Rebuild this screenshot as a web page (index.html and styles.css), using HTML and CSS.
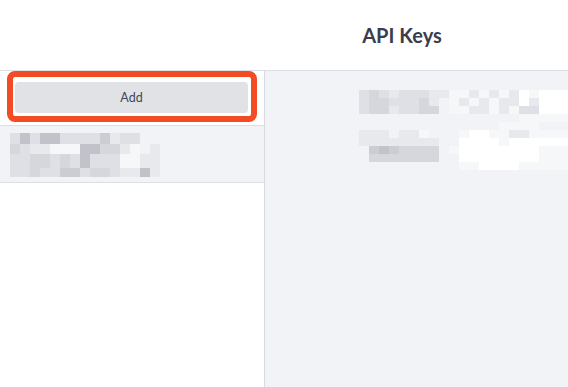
FILE: index.html
```html
<!DOCTYPE html>
<html lang="en">
<head>
    <meta charset="UTF-8">
    <meta name="viewport" content="width=device-width, initial-scale=1.0">
    <title>API Keys</title>
    <link rel="stylesheet" href="styles.css">
</head>
<body>
    <header class="topbar">
        <h1>API Keys</h1>
    </header>

    <div class="main">
        <aside class="sidebar">
            <div class="add-row">
                <button class="add-btn">Add</button>
                <span class="highlight"></span>
            </div>
            <div class="key-item">
                <!-- redacted key name -->
                <div class="mosaic mosaic-left">
                    <span class="d"></span><span class="a"></span><span class="d"></span><span class="a"></span><span class="a"></span><span class="d"></span><span class="d"></span><span class="d"></span><span class="d"></span><span class="b"></span><span class="e"></span><span class="d"></span><span class="d"></span><span class="x"></span><span class="x"></span>
                    <span class="c"></span><span class="d"></span><span class="e"></span><span class="e"></span><span class="f"></span><span class="f"></span><span class="f"></span><span class="a"></span><span class="a"></span><span class="c"></span><span class="c"></span><span class="e"></span><span class="f"></span><span class="x"></span><span class="e"></span>
                    <span class="d"></span><span class="d"></span><span class="c"></span><span class="c"></span><span class="d"></span><span class="c"></span><span class="d"></span><span class="a"></span><span class="d"></span><span class="d"></span><span class="d"></span><span class="f"></span><span class="f"></span><span class="e"></span><span class="e"></span>
                    <span class="d"></span><span class="d"></span><span class="c"></span><span class="d"></span><span class="d"></span><span class="b"></span><span class="b"></span><span class="d"></span><span class="c"></span><span class="c"></span><span class="d"></span><span class="e"></span><span class="e"></span><span class="a"></span><span class="e"></span>
                </div>
            </div>
        </aside>

        <section class="detail">
            <!-- redacted key details -->
            <div class="mosaic mosaic-right">
                <span class="d"></span><span class="c"></span><span class="d"></span><span class="e"></span><span class="d"></span><span class="d"></span><span class="d"></span><span class="e"></span><span class="e"></span><span class="f"></span><span class="f"></span><span class="e"></span><span class="f"></span><span class="e"></span><span class="f"></span><span class="e"></span><span class="w"></span><span class="f"></span><span class="w"></span><span class="w"></span><span class="w"></span>
                <span class="d"></span><span class="c"></span><span class="c"></span><span class="d"></span><span class="d"></span><span class="d"></span><span class="c"></span><span class="e"></span><span class="x"></span><span class="f"></span><span class="e"></span><span class="f"></span><span class="e"></span><span class="f"></span><span class="e"></span><span class="e"></span><span class="w"></span><span class="e"></span><span class="w"></span><span class="w"></span><span class="w"></span>
                <span class="d"></span><span class="c"></span><span class="c"></span><span class="e"></span><span class="d"></span><span class="d"></span><span class="c"></span><span class="c"></span><span class="x"></span><span class="f"></span><span class="f"></span><span class="e"></span><span class="e"></span><span class="f"></span><span class="e"></span><span class="f"></span><span class="d"></span><span class="d"></span><span class="w"></span><span class="w"></span><span class="w"></span>
                <span class="x"></span><span class="x"></span><span class="x"></span><span class="x"></span><span class="x"></span><span class="x"></span><span class="x"></span><span class="x"></span><span class="x"></span><span class="x"></span><span class="x"></span><span class="x"></span><span class="x"></span><span class="x"></span><span class="x"></span><span class="x"></span><span class="f"></span><span class="f"></span><span class="f"></span><span class="f"></span><span class="f"></span>
                <span class="x"></span><span class="x"></span><span class="x"></span><span class="x"></span><span class="x"></span><span class="x"></span><span class="x"></span><span class="x"></span><span class="x"></span><span class="x"></span><span class="x"></span><span class="x"></span><span class="x"></span><span class="x"></span><span class="f"></span><span class="f"></span><span class="f"></span><span class="f"></span><span class="x"></span><span class="x"></span><span class="x"></span>
                <span class="e"></span><span class="e"></span><span class="e"></span><span class="x"></span><span class="e"></span><span class="e"></span><span class="f"></span><span class="x"></span><span class="x"></span><span class="x"></span><span class="f"></span><span class="w"></span><span class="w"></span><span class="f"></span><span class="f"></span><span class="e"></span><span class="e"></span><span class="f"></span><span class="f"></span><span class="f"></span><span class="f"></span>
                <span class="e"></span><span class="e"></span><span class="e"></span><span class="e"></span><span class="e"></span><span class="e"></span><span class="e"></span><span class="e"></span><span class="x"></span><span class="x"></span><span class="w"></span><span class="w"></span><span class="w"></span><span class="w"></span><span class="f"></span><span class="w"></span><span class="w"></span><span class="w"></span><span class="w"></span><span class="w"></span><span class="w"></span>
                <span class="x"></span><span class="b"></span><span class="a"></span><span class="b"></span><span class="c"></span><span class="c"></span><span class="c"></span><span class="c"></span><span class="x"></span><span class="f"></span><span class="w"></span><span class="w"></span><span class="w"></span><span class="w"></span><span class="w"></span><span class="w"></span><span class="w"></span><span class="w"></span><span class="f"></span><span class="f"></span><span class="f"></span>
                <span class="x"></span><span class="c"></span><span class="c"></span><span class="c"></span><span class="c"></span><span class="c"></span><span class="c"></span><span class="c"></span><span class="x"></span><span class="x"></span><span class="w"></span><span class="w"></span><span class="w"></span><span class="w"></span><span class="w"></span><span class="w"></span><span class="w"></span><span class="w"></span><span class="f"></span><span class="f"></span><span class="f"></span>
                <span class="x"></span><span class="x"></span><span class="x"></span><span class="x"></span><span class="x"></span><span class="x"></span><span class="x"></span><span class="x"></span><span class="x"></span><span class="x"></span><span class="f"></span><span class="f"></span><span class="w"></span><span class="w"></span><span class="w"></span><span class="w"></span><span class="f"></span><span class="f"></span><span class="f"></span><span class="f"></span><span class="f"></span>
            </div>
        </section>
    </div>
</body>
</html>
```

FILE: styles.css
```css
* {
    box-sizing: border-box;
}

body {
    margin: 0;
    height: 387px;
    overflow: hidden;
    font-family: Lato, "Open Sans", sans-serif;
    color: #3c3e4f;
    background-color: white;
    display: flex;
    flex-direction: column;
}

.topbar {
    height: 71px;
    flex-shrink: 0;
    border-bottom: 1px solid #dcdfe5;
    display: flex;
    align-items: center;
    justify-content: center;
    padding-left: 236px;
    padding-bottom: 1px;
}

.topbar h1 {
    margin: 0;
    font-size: 20px;
    font-weight: 700;
    color: #3b3d4e;
}

.main {
    flex: 1;
    display: flex;
    min-height: 0;
}

.sidebar {
    width: 265px;
    flex-shrink: 0;
    border-right: 1px solid #d7dae1;
    background-color: white;
}

.add-row {
    position: relative;
    height: 55px;
    padding: 11px 16px 0 15px;
    border-bottom: 1px solid #dcdfe5;
}

.add-btn {
    display: block;
    width: 233px;
    height: 31px;
    border: none;
    border-radius: 4px;
    background-color: #e0e2e6;
    font-family: Lato, "Open Sans", sans-serif;
    font-size: 12.5px;
    color: #444656;
    padding: 0;
}

/* annotation outline drawn over the button */
.highlight {
    position: absolute;
    left: 7px;
    top: 0;
    width: 250px;
    height: 51px;
    border: 6px solid #f34b23;
    border-radius: 8px;
}

.key-item {
    height: 57px;
    padding: 7px 0 0 10px;
    background-color: #f2f3f7;
    border-bottom: 1px solid #dcdfe5;
}

.detail {
    flex: 1;
    background-color: #f2f3f7;
    padding: 19px 0 0 94px;
    overflow: hidden;
}

.mosaic {
    display: grid;
}

.mosaic-left {
    grid-template-columns: repeat(15, 10px);
    grid-template-rows: 11px 10px 14px 9px;
}

.mosaic-right {
    grid-template-columns: repeat(21, 10px);
    grid-auto-rows: 8px;
}

.mosaic .a { background-color: #c2c3ca; }
.mosaic .b { background-color: #cccdd3; }
.mosaic .c { background-color: #d6d7dd; }
.mosaic .d { background-color: #dfe0e5; }
.mosaic .e { background-color: #e8e9ed; }
.mosaic .f { background-color: #f6f7f9; }
.mosaic .w { background-color: #ffffff; }
.mosaic .x { background-color: transparent; }
```
